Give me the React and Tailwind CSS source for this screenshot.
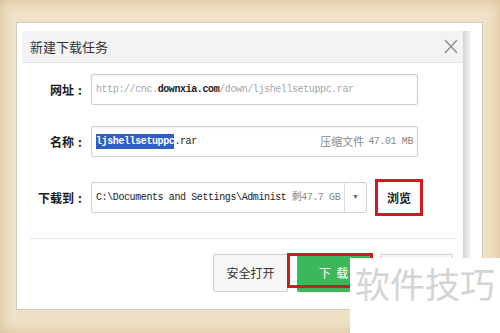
import React from 'react';

const cjk = { fontFamily: '"Noto Sans CJK SC", "Noto Sans", sans-serif' };
const mono = { fontFamily: '"Liberation Mono", "Noto Sans CJK SC", monospace' };

const Label = ({ children }) => (
    <div className="w-[60px] flex justify-end items-center text-[12px] text-[#1a1a1a] font-bold" style={cjk}>
        <span>{children}</span>
        <span className="ml-[4px] font-bold">:</span>
    </div>
);

const App = () => {
    return (
        <div className="relative w-[500px] h-[333px] overflow-hidden bg-[#efe1c6] shadow-[inset_0_0_14px_#d8bd92] pt-[22px] pl-[16px]">
            {/* white paper panel */}
            <div className="w-[467px] h-[288px] bg-white border border-[#d4cabb] flex pt-[8px] pl-[5px]">
                {/* dialog */}
                <div className="w-[441px] flex flex-col">
                    <div className="h-[32px] bg-[#f3f3f3] border-b border-[#e2e2e2] flex items-center justify-between pl-[8px] pr-[5px]">
                        <span className="text-[13px] text-[#333]" style={cjk}>新建下载任务</span>
                        <svg width="14" height="15" viewBox="0 0 14 15">
                            <path d="M1 1 L13 14 M13 1 L1 14" stroke="#8a8a8a" strokeWidth="1.3" fill="none" />
                        </svg>
                    </div>

                    <div className="flex flex-col pt-[11px]">
                        {/* url row */}
                        <div className="flex items-center gap-[9px]">
                            <Label>网址</Label>
                            <div className="w-[327px] h-[31px] border border-[#cfcfcf] rounded-[2px] shadow-[inset_0_1px_2px_#eee] flex items-center px-[4px] text-[10px] tracking-[-0.4px] text-[#a5a5a5]" style={mono}>
                                <span>http://cnc.</span>
                                <span className="text-[#222] font-bold">downxia.com</span>
                                <span>/down/ljshellsetuppc.rar</span>
                            </div>
                        </div>

                        {/* name row */}
                        <div className="flex items-center gap-[9px] mt-[21px]">
                            <Label>名称</Label>
                            <div className="w-[327px] h-[31px] border border-[#cfcfcf] rounded-[2px] shadow-[inset_0_1px_2px_#eee] flex items-center justify-between px-[4px]">
                                <div className="flex items-center text-[10px] tracking-[-0.4px] text-[#222]" style={mono}>
                                    <span className="bg-[#2f5fc4] text-white font-bold leading-[15px]">ljshellsetuppc</span>
                                    <span>.rar</span>
                                </div>
                                <div className="flex items-center gap-[4px] text-[#888]">
                                    <span className="text-[11px]" style={cjk}>压缩文件</span>
                                    <span className="text-[10px] tracking-[-0.4px]" style={mono}>47.01 MB</span>
                                </div>
                            </div>
                        </div>

                        {/* path row */}
                        <div className="flex items-center gap-[9px] mt-[22px]">
                            <Label>下载到</Label>
                            <div className="w-[276px] h-[31px] border border-[#cfcfcf] rounded-[2px] flex items-stretch">
                                <div className="flex-1 flex items-center pl-[4px] text-[10px] tracking-[-0.4px] text-[#222]" style={mono}>
                                    <span>C:\Documents and Settings\Administ</span>
                                    <span className="ml-[5px] text-[#888]">剩47.7 GB</span>
                                </div>
                                <div className="w-[22px] border-l border-[#dcdcdc] flex items-center justify-center text-[7px] text-[#666]">▼</div>
                            </div>
                            <div className="ml-[-1px] border-[3px] border-[#cf1a1f] p-[1px]">
                                <div className="w-[40px] h-[29px] bg-white flex items-center justify-center text-[12px] text-[#222] font-bold" style={cjk}>浏览</div>
                            </div>
                        </div>

                        <div className="ml-[8px] mt-[22px] w-[427px] h-px bg-[#e4e4e4]" />

                        {/* buttons */}
                        <div className="flex justify-end items-center gap-[9px] pr-[10px] mt-[15px]">
                            <div className="w-[75px] h-[38px] bg-[#f6f6f6] border border-[#cdcdcd] rounded-[2px] flex items-center justify-center text-[12px] text-[#333]" style={cjk}>安全打开</div>
                            <div className="w-[73px] h-[38px] bg-[#3cb85b] rounded-[2px] flex items-center justify-center text-[12px] text-white" style={cjk}>下&nbsp;&nbsp;载</div>
                            <div className="ml-[1px] w-[73px] h-[38px] bg-[#f6f6f6] border border-[#cdcdcd] rounded-[2px]" />
                        </div>
                    </div>
                </div>
                {/* side shadow strip */}
                <div className="w-[8px] h-[269px] bg-gradient-to-r from-[#d3d3d3] to-[#f7f7f7]" />
            </div>

            {/* red annotation on download button */}
            <div className="absolute left-[287px] top-[253px] w-[86px] h-[35px] border-[3px] border-[#cf1a1f]" />

            {/* watermark */}
            <div className="absolute left-[350px] top-[258px] w-[150px] h-[75px] bg-white flex items-start pl-[5px] pt-[2px]">
                <span className="text-[35px] leading-[46px] text-[#d4d4d4]" style={cjk}>软件技巧</span>
            </div>
        </div>
    );
};

export default App;
